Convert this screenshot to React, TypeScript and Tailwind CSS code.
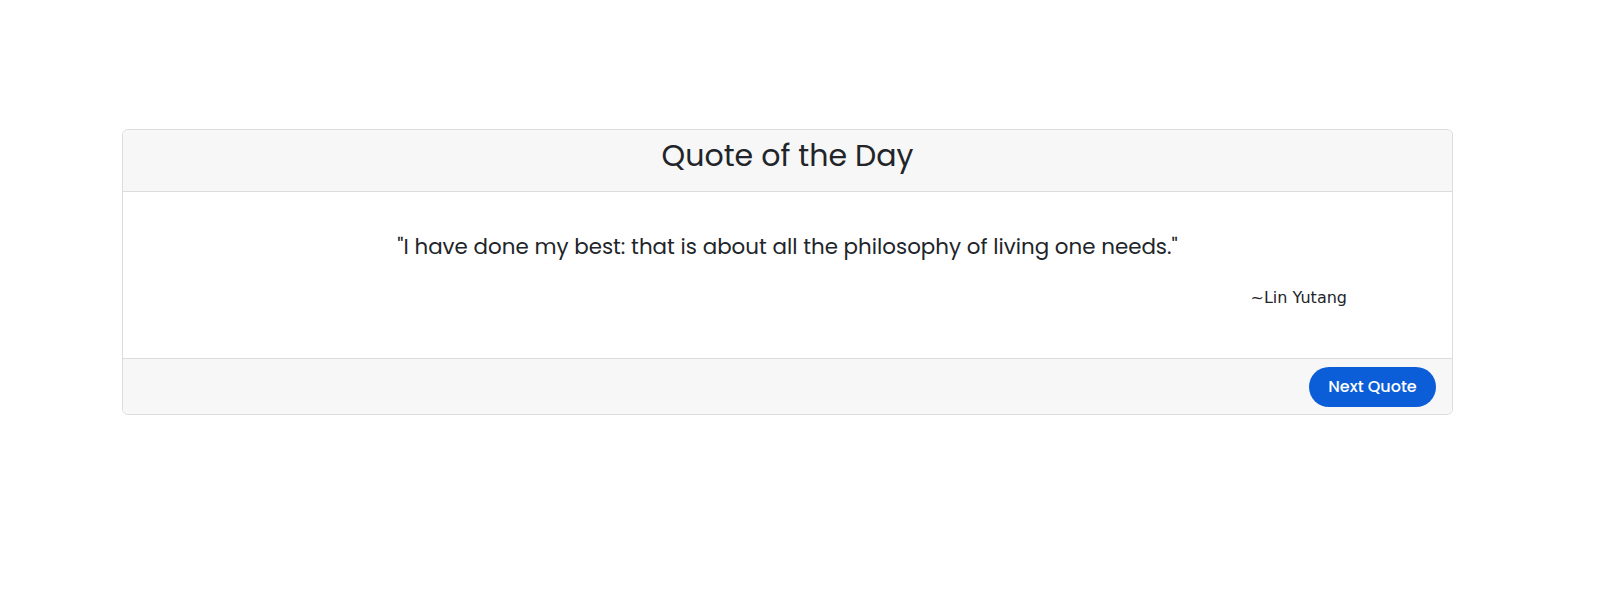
const quote = {
  text: "I have done my best: that is about all the philosophy of living one needs.",
  author: "Lin Yutang",
};

const App = () => {
  return (
    <div
      className="min-h-screen bg-white pt-[129px] text-[#212529]"
      style={{ fontFamily: "Poppins, 'Open Sans', sans-serif" }}
    >
      <div className="ml-[122px] w-[1331px] rounded-md border border-[#dcdcdc] bg-white">
        <div className="flex h-[62px] items-center justify-center rounded-t-md border-b border-[#dcdcdc] bg-[#f7f7f7] pb-[10px]">
          <h2 className="text-[30px] font-normal leading-none">Quote of the Day</h2>
        </div>
        <div className="h-[166px] px-4 pt-[39px]">
          <p className="text-center text-[21.4px] leading-[32px]">"{quote.text}"</p>
          <p
            className="mt-[23px] pr-[89px] text-right text-[16px]"
            style={{ fontFamily: "'Comic Sans MS', 'DejaVu Sans', sans-serif" }}
          >
            ~{quote.author}
          </p>
        </div>
        <div className="flex h-[56px] items-center justify-end rounded-b-md border-t border-[#dcdcdc] bg-[#f7f7f7] pr-4">
          <button className="h-10 w-[127px] rounded-full bg-[#0b5ed7] text-base font-medium text-white">
            Next Quote
          </button>
        </div>
      </div>
    </div>
  );
};

export default App;
